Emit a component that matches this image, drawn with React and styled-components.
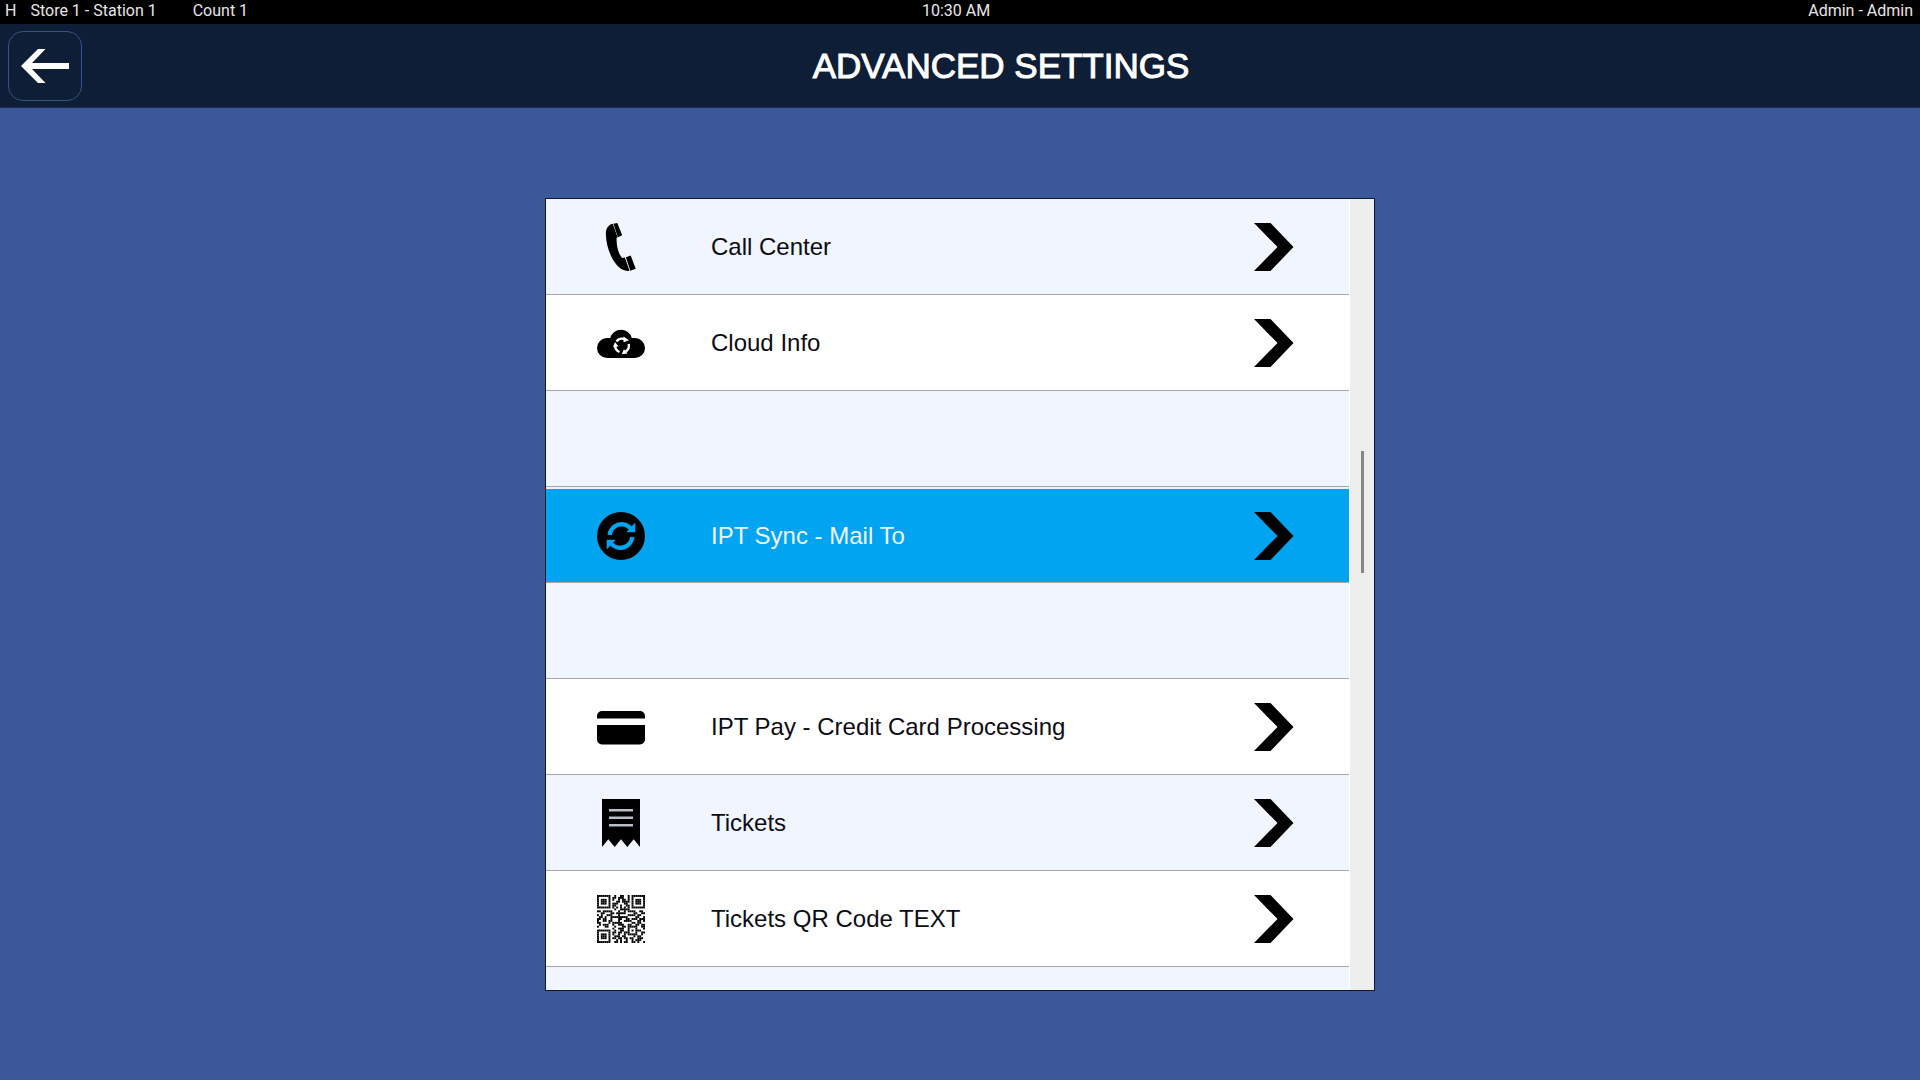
import React from "react";
import styled, { createGlobalStyle } from "styled-components";


const GlobalStyle = createGlobalStyle`
    *, *::before, *::after {
        box-sizing: border-box;
    }

    body {
        margin: 0;
        font-family: "Liberation Sans", Arial, sans-serif;
        background: #3b5998;
    }
`;

const Page = styled.div`
    display: flex;
    flex-direction: column;
    height: 100vh;
    background: #3b5998;
`;


const StatusBar = styled.div`
    display: grid;
    grid-template-columns: 1fr auto 1fr;
    flex: none;
    height: 24px;
    padding: 0 7px 0 5px;
    background: #000;
    color: #e6e6e6;
    font-family: Roboto, "Liberation Sans", sans-serif;
    font-size: 16px;
    line-height: 22px;
    white-space: pre;
`;

const StatusGroup = styled.div`
    display: flex;
`;

const StatusText = styled.span`
    margin-right: ${({ $gap }) => $gap || 0}px;
`;

const StatusUser = styled.span`
    text-align: right;
`;


const Header = styled.header`
    display: flex;
    align-items: center;
    flex: none;
    height: 84px;
    padding: 0 0 0 8px;
    background: #0e1e36;
    border-bottom: 1px solid #1c3056;
`;

const BackButton = styled.button`
    display: flex;
    align-items: center;
    justify-content: center;
    flex: none;
    width: 74px;
    height: 70px;
    padding: 0;
    background: transparent;
    border: 1px solid #31558a;
    border-radius: 15px;
    cursor: pointer;
`;

const Title = styled.h1`
    flex: 1;
    margin: 0;
    color: #fff;
    font-size: 35px;
    font-weight: normal;
    line-height: 40px;
    text-align: center;
    -webkit-text-stroke: 1px #fff;
`;


const Main = styled.main`
    display: flex;
    justify-content: center;
    flex: 1;
    min-height: 0;
    padding: 90px 0 89px;
`;

const Panel = styled.div`
    display: flex;
    width: 100%;
    max-width: 830px;
    background: #fff;
    border: 1px solid #10182a;
`;

const List = styled.ul`
    flex: 1;
    margin: 0 1px 0 0;
    padding: 0;
    list-style: none;
    overflow: hidden;
`;

const Item = styled.li`
    height: 96px;
    background: ${({ $alt }) => ($alt ? "#f0f5ff" : "#fff")};
    border-bottom: 1px solid #a6a6a6;
`;

const ItemButton = styled.button`
    display: flex;
    align-items: center;
    width: 100%;
    height: 100%;
    padding: ${({ $selected }) => ($selected ? 0 : 1)}px 55px 0 51px;
    background: ${({ $selected }) => ($selected ? "#00a4f0" : "transparent")};
    border: 0;
    border-top: ${({ $selected }) => ($selected ? "2px solid #e8f3fc" : "0")};
    color: ${({ $selected }) => ($selected ? "#f0f5ff" : "#0c0c14")};
    font-family: inherit;
    font-size: 24px;
    line-height: 28px;
    text-align: left;
    cursor: pointer;
`;

const ItemLabel = styled.span`
    flex: 1;
    margin-left: 66px;
`;

const Icon = styled.svg`
    display: block;
    flex: none;
    width: 48px;
    height: 48px;
`;

const ChevronIcon = styled.svg`
    display: block;
    flex: none;
    width: 40px;
    height: 48px;
`;

const ScrollTrack = styled.div`
    flex: none;
    width: 24px;
    background: #eee;
`;

const ScrollThumb = styled.div`
    width: 3px;
    height: 122px;
    margin: 252px 0 0 11px;
    background: #868686;
`;


const PhoneIcon = () => (
    <Icon viewBox="0 0 48 48" aria-hidden="true">
        <path d="M14 1.300C10 3.500 8.700 7 8.900 12c.3 8 2.600 17 7 24.500C19.500 42.500 24 47.500 30.500 48l2-.2-4.600-13.300-2.800.5c-3-3.500-5.800-11-5.500-20.200l1-.5L15.700.7z" />
        <path d="M16.400.7 20.300 0l4.900 12.300-4.400 2zM28.900 34.200l4.800-1.600 5 13.200-5.400 2z" />
    </Icon>
);

const CloudIcon = () => (
    <Icon viewBox="0 0 48 48" aria-hidden="true">
        <path d="M10 39a10 10 0 0 1 0-20h3.200a11.200 11.200 0 0 1 21.600 0H38a10 10 0 0 1 0 20z" />
        <g fill="none" stroke="#fff" strokeWidth="2.400">
            <path d="M19.500 22.500a7 7 0 0 1 7.500-2.500" />
            <path d="M31.700 25a7 7 0 0 1-3.200 7.600" />
            <path d="M22.500 33a7 7 0 0 1-4.400-6.500" />
        </g>
        <path fill="#fff" d="m26.500 17.500 5.500 3.700-5.500 2zM30.500 34.500l-5.800.8 2.200-5zM16 28l2-5 3.500 4.600z" />
    </Icon>
);

const SyncIcon = () => (
    <Icon viewBox="0 0 48 48" aria-hidden="true">
        <circle cx="24" cy="24" r="24" />
        <path fill="none" stroke="#00a4f0" strokeWidth="4.500" d="M12.700 23a12 12 0 0 1 21.500-6M35.300 25a12 12 0 0 1-21.500 6" />
        <path fill="#00a4f0" d="M38.300 10.500V20.200H29.300zM9.700 37.500V27.800h9z" />
    </Icon>
);

const CardIcon = () => (
    <Icon viewBox="0 0 48 48" aria-hidden="true">
        <path d="M0 15.500V13a5 5 0 0 1 5-5h38a5 5 0 0 1 5 5v2.500zM0 22h48V36.500a5 5 0 0 1-5 5H5a5 5 0 0 1-5-5z" />
    </Icon>
);

const ReceiptIcon = () => (
    <Icon viewBox="0 0 48 48" aria-hidden="true">
        <path d="M5 0h38v48l-6.300-7.700L30.300 48 24 40.300 17.700 48 11.300 40.300 5 48z" />
        <path stroke="#b9bdc6" strokeWidth="2.500" d="M12 11.300h24M12 18.700h24M12 26.200h24" />
    </Icon>
);

const QR_ROWS = [
    "1111111001001100101111111",
    "1000001011011100101000001",
    "1011101010010110101011101",
    "1011101000110111101011101",
    "1011101011100011001011101",
    "1000001011001001101000001",
    "1111111010101010101111111",
    "0000000001001111100000000",
    "1101111100010010111100110",
    "0011000110111110000110011",
    "1010011100010000111101100",
    "0110100111111111000011001",
    "1101100100011001101110111",
    "1001101100010011110001101",
    "1100001011111000001101100",
    "0101110010011100110011011",
    "1000110001000110111110011",
    "0000000010011100100010001",
    "1111111001001100101011100",
    "1000001011011011100010011",
    "1011101010010010111110010",
    "1011101001110110000101100",
    "1011101011011011011001110",
    "1000001000101001001011100",
    "1111111001101011001101001",
];

const QrIcon = () => (
    <Icon viewBox="0 0 25 25" aria-hidden="true">
        {QR_ROWS.map((row, y) =>
            row.split("").map((cell, x) =>
                cell === "1" ? <rect key={`${x}-${y}`} x={x} y={y} width="1" height="1" /> : null
            )
        )}
    </Icon>
);

const Chevron = () => (
    <ChevronIcon viewBox="0 0 40 48" aria-hidden="true">
        <path d="M0 0h16.500L39.500 24l-23 24H0l23.500-24z" />
    </ChevronIcon>
);


const items = [
    { label: "Call Center", icon: PhoneIcon },
    { label: "Cloud Info", icon: CloudIcon },
    {},
    { label: "IPT Sync - Mail To", icon: SyncIcon, selected: true },
    {},
    { label: "IPT Pay - Credit Card Processing", icon: CardIcon },
    { label: "Tickets", icon: ReceiptIcon },
    { label: "Tickets QR Code TEXT", icon: QrIcon },
    {},
];

const SettingsItem = ({ label, icon: ItemIcon, selected, alt }) => (
    <Item $alt={alt}>
        {label && (
            <ItemButton type="button" $selected={selected}>
                <ItemIcon />
                <ItemLabel>{label}</ItemLabel>
                <Chevron />
            </ItemButton>
        )}
    </Item>
);


const App = () => (

    <Page>
        <GlobalStyle />

        <StatusBar>
            <StatusGroup>
                <StatusText $gap={14}>H</StatusText>
                <StatusText $gap={36}>Store 1 - Station 1</StatusText>
                <StatusText>Count 1</StatusText>
            </StatusGroup>
            <StatusText $gap={6}>10:30 AM</StatusText>
            <StatusUser>Admin - Admin</StatusUser>
        </StatusBar>

        <Header>
            <BackButton type="button" aria-label="Back">
                <svg width="48" height="34" viewBox="0 0 48 34" aria-hidden="true">
                    <path fill="#fff" d="M17 0h7.500L11 14h37v6H11l13.500 14H17L0 17z" />
                </svg>
            </BackButton>
            <Title>ADVANCED SETTINGS</Title>
        </Header>

        <Main>
            <Panel>
                <List>
                    {items.map((item, index) => (
                        <SettingsItem key={index} alt={index % 2 === 0} {...item} />
                    ))}
                </List>
                <ScrollTrack>
                    <ScrollThumb />
                </ScrollTrack>
            </Panel>
        </Main>
    </Page>

);


export default App;
